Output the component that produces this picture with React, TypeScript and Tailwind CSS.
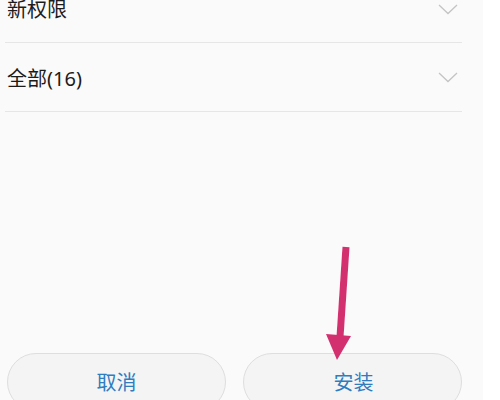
import React from "react";

function Chevron() {
  return (
    <svg width="20" height="11" viewBox="0 0 20 11" className="shrink-0">
      <polyline points="1,1 10,9.5 19,1" fill="none" stroke="#c4c4c4" strokeWidth="1.3" />
    </svg>
  );
}

export default function App() {
  const font = { fontFamily: '"Noto Sans", "Noto Sans CJK SC", sans-serif' };
  return (
    <div className="relative w-[500px] h-[400px] overflow-hidden bg-white" style={font}>
      <div className="w-[483px] h-[400px] bg-[#fafafa] flex flex-col">
        <div className="-mt-[24px] h-[67px] ml-[5px] w-[457px] border-b border-[#e6e6e6] flex items-center justify-between pl-[2px] pr-[4px]">
          <span className="text-[20px] text-[#1c1c1c] leading-none pt-[2px]">新权限</span>
          <Chevron />
        </div>
        <div className="h-[69px] ml-[5px] w-[457px] border-b border-[#e6e6e6] flex items-center justify-between pl-[2px] pr-[4px]">
          <span className="text-[20px] text-[#1c1c1c] leading-none pt-[3px]">全部(16)</span>
          <Chevron />
        </div>
        <div className="flex-1" />
        <div className="flex gap-[17px] pl-[7px] -mb-[11px]">
          <div className="w-[219px] h-[58px] rounded-full bg-[#f4f4f4] border border-[#dedede] flex items-center justify-center pt-[1px]">
            <span className="text-[20px] text-[#2f7cbf]">取消</span>
          </div>
          <div className="w-[219px] h-[58px] rounded-full bg-[#f4f4f4] border border-[#dedede] flex items-center justify-center pt-[1px]">
            <span className="text-[20px] text-[#2f7cbf] ml-[2px]">安装</span>
          </div>
        </div>
      </div>
      <svg className="absolute left-0 top-0" width="500" height="400" viewBox="0 0 500 400">
        <line x1="346" y1="247" x2="340" y2="337" stroke="#d3306f" strokeWidth="7" />
        <polygon points="326,334 351,336 337,360" fill="#d3306f" />
      </svg>
    </div>
  );
}
